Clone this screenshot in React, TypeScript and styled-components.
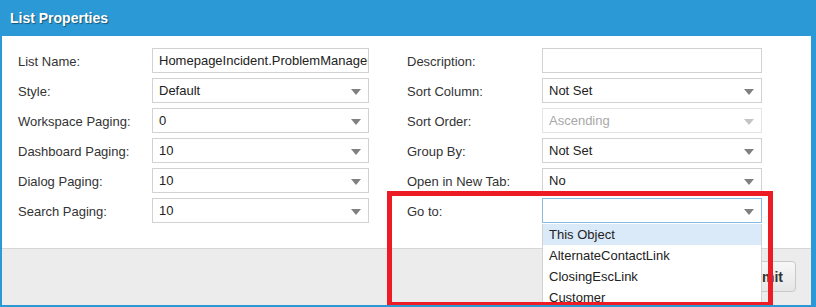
import React from 'react';
import styled, { createGlobalStyle } from 'styled-components';

const GlobalStyle = createGlobalStyle`
  html, body { margin: 0; padding: 0; background: #fff; }
  * { box-sizing: border-box; }
  body { font-family: "Liberation Sans", Arial, sans-serif; font-size: 13px; color: #333; }
`;

type Field = {
  label: string;
  value: string;
  kind?: 'text' | 'select';
  disabled?: boolean;
  focused?: boolean;
};

const LEFT: Field[] = [
  { label: 'List Name:', value: 'HomepageIncident.ProblemManager', kind: 'text' },
  { label: 'Style:', value: 'Default' },
  { label: 'Workspace Paging:', value: '0' },
  { label: 'Dashboard Paging:', value: '10' },
  { label: 'Dialog Paging:', value: '10' },
  { label: 'Search Paging:', value: '10' },
];

const RIGHT: Field[] = [
  { label: 'Description:', value: '', kind: 'text' },
  { label: 'Sort Column:', value: 'Not Set' },
  { label: 'Sort Order:', value: 'Ascending', disabled: true },
  { label: 'Group By:', value: 'Not Set' },
  { label: 'Open in New Tab:', value: 'No' },
  { label: 'Go to:', value: '', focused: true },
];

const OPTIONS = ['This Object', 'AlternateContactLink', 'ClosingEscLink', 'Customer'];

const Window = styled.div`
  position: relative;
  width: 816px;
  height: 307px;
  display: flex;
  flex-direction: column;
  border-style: solid;
  border-color: #2a99d6;
  border-width: 0 5px 2px 2px;
  overflow: hidden;
`;

const Header = styled.div`
  height: 36px;
  margin: 0 -5px 0 -2px;
  padding-left: 10px;
  background: #2a99d6;
  display: flex;
  align-items: center;
  color: #fff;
  font-weight: bold;
  font-size: 14px;
  text-shadow: 1px 1px 1px rgba(0, 0, 0, 0.45);
`;

const Body = styled.div`
  flex: 1;
  background: #fff;
  display: flex;
  padding: 12px 0 0 16px;
  gap: 38px;
`;

const Column = styled.div<{ $labelWidth: number; $inputWidth: number }>`
  display: grid;
  grid-template-columns: ${(p) => p.$labelWidth}px ${(p) => p.$inputWidth}px;
  grid-auto-rows: 25px;
  row-gap: 5px;
  align-content: start;
`;

const Label = styled.div`
  display: flex;
  align-items: center;
  padding-top: 1px;
  white-space: nowrap;
`;

const Control = styled.div<{ $disabled?: boolean; $focused?: boolean }>`
  position: relative;
  display: flex;
  align-items: center;
  padding: 0 22px 0 6px;
  border: 1px solid ${(p) => (p.$focused ? '#86b9e3' : p.$disabled ? '#e4e4e4' : '#d2d2d2')};
  color: ${(p) => (p.$disabled ? '#a8a8a8' : '#222')};
  background: #fff;
  white-space: nowrap;
  overflow: hidden;
`;

const TextControl = styled(Control)`
  padding-right: 0;
`;

const Arrow = styled.span<{ $disabled?: boolean }>`
  position: absolute;
  right: 7px;
  top: 10px;
  width: 0;
  height: 0;
  border-left: 5px solid transparent;
  border-right: 5px solid transparent;
  border-top: 6px solid ${(p) => (p.$disabled ? '#c4c4c4' : '#808080')};
`;

const Footer = styled.div`
  height: 57px;
  background: #ececec;
  border-top: 1px solid #d6d6d6;
  display: flex;
  justify-content: flex-end;
  align-items: flex-start;
  padding: 12px 15px 0 0;
`;

const Button = styled.button`
  height: 31px;
  padding: 0 12px;
  font-family: "Liberation Sans", Arial, sans-serif;
  font-size: 14px;
  font-weight: bold;
  color: #333;
  background: linear-gradient(#f7f7f7, #e6e6e6);
  border: 1px solid #c8c8c8;
  border-radius: 4px;
`;

const Dropdown = styled.ul`
  position: absolute;
  left: 540px;
  top: 224px;
  width: 220px;
  margin: 0;
  padding: 0;
  list-style: none;
  background: #fff;
  border: 1px solid #d2d2d2;
  border-top: none;
`;

const Option = styled.li<{ $active?: boolean }>`
  height: 21px;
  line-height: 21px;
  padding-left: 6px;
  color: #222;
  background: ${(p) => (p.$active ? '#dbeaf9' : '#fff')};
`;

const Highlight = styled.div`
  position: absolute;
  left: 385px;
  top: 191px;
  width: 386px;
  height: 116px;
  border: 5px solid #ed1c24;
  pointer-events: none;
`;

const renderField = (f: Field) => (
  <React.Fragment key={f.label}>
    <Label>{f.label}</Label>
    {f.kind === 'text' ? (
      <TextControl>{f.value}</TextControl>
    ) : (
      <Control $disabled={f.disabled} $focused={f.focused}>
        {f.value}
        <Arrow $disabled={f.disabled} />
      </Control>
    )}
  </React.Fragment>
);

const App: React.FC = () => {
  return (
    <>
      <GlobalStyle />
      <Window>
        <Header>List Properties</Header>
        <Body>
          <Column $labelWidth={134} $inputWidth={217}>
            {LEFT.map(renderField)}
          </Column>
          <Column $labelWidth={135} $inputWidth={220}>
            {RIGHT.map(renderField)}
          </Column>
        </Body>
        <Footer>
          <Button>Submit</Button>
        </Footer>
        <Dropdown>
          {OPTIONS.map((o, i) => (
            <Option key={o} $active={i === 0}>
              {o}
            </Option>
          ))}
        </Dropdown>
        <Highlight />
      </Window>
    </>
  );
};

export default App;
